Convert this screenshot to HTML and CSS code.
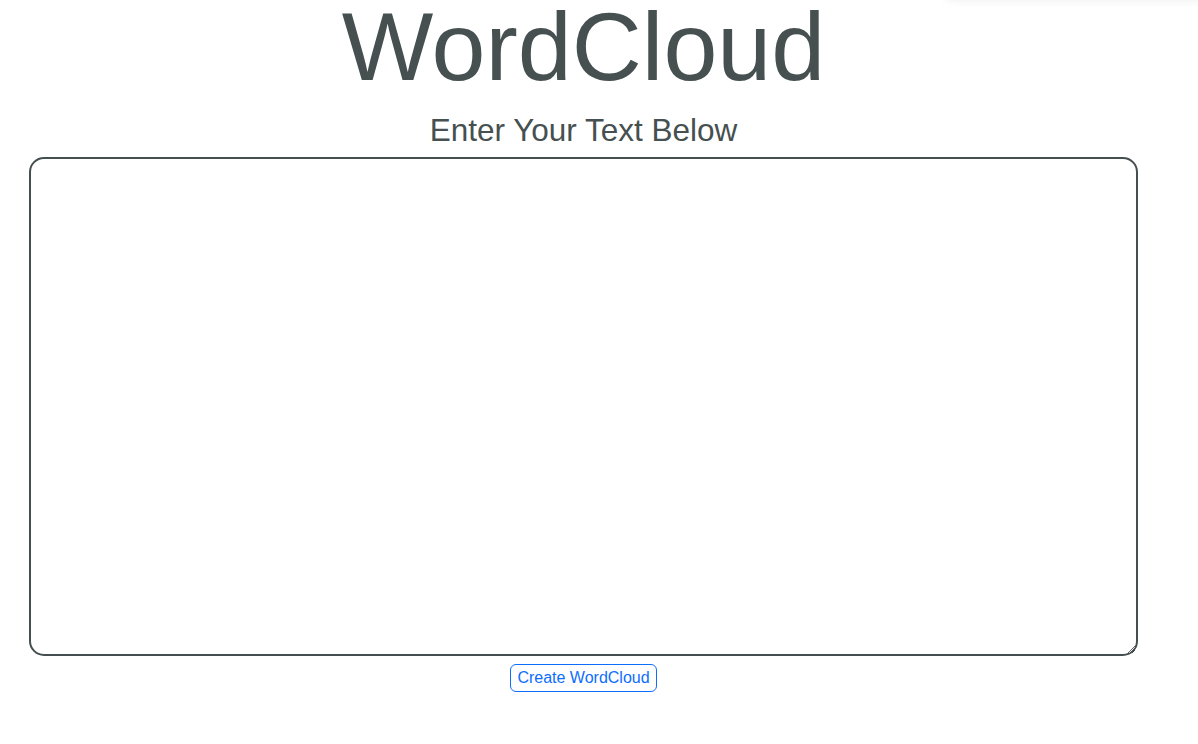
FILE: index.html
```html
<!DOCTYPE html>
<html lang="en">
<head>
<meta charset="utf-8">
<title>WordCloud</title>
<link rel="stylesheet" href="styles.css">
</head>
<body>
<div class="corner-shadow"></div>
<main class="page">
  <h1 class="title">WordCloud</h1>
  <h2 class="subtitle">Enter Your Text Below</h2>
  <textarea class="text-input"></textarea>
  <button class="create-btn" type="button">Create WordCloud</button>
</main>
</body>
</html>
```

FILE: styles.css
```css
html, body {
  margin: 0;
  padding: 0;
  background: #ffffff;
}
body {
  font-family: "Liberation Sans", Arial, Helvetica, sans-serif;
  color: #465050;
}
.corner-shadow {
  position: fixed;
  top: -20px;
  right: -10px;
  width: 262px;
  height: 20px;
  background: #fff;
  box-shadow: 0 0 10px rgba(0, 0, 0, 0.07);
}
.page {
  width: 1167px;
  display: flex;
  flex-direction: column;
  align-items: center;
}
.title {
  margin: 0;
  font-size: 97px;
  font-weight: normal;
  line-height: 94px;
}
.subtitle {
  margin: 18px 0 0;
  font-size: 31.5px;
  font-weight: normal;
  line-height: 36px;
}
.text-input {
  box-sizing: border-box;
  margin-top: 9px;
  width: 1109px;
  height: 499px;
  border: 2px solid #454f4f;
  border-radius: 15px;
  padding: 8px;
  font-family: "Liberation Sans", Arial, sans-serif;
  font-size: 16px;
  outline: none;
}
.create-btn {
  box-sizing: border-box;
  margin-top: 8px;
  height: 28px;
  padding: 3px 6px;
  border: 1px solid #0d6efd;
  border-radius: 6px;
  background: #fff;
  color: #0d6efd;
  font-family: "Liberation Sans", Arial, sans-serif;
  font-size: 16px;
  line-height: 20px;
  cursor: pointer;
}
```
